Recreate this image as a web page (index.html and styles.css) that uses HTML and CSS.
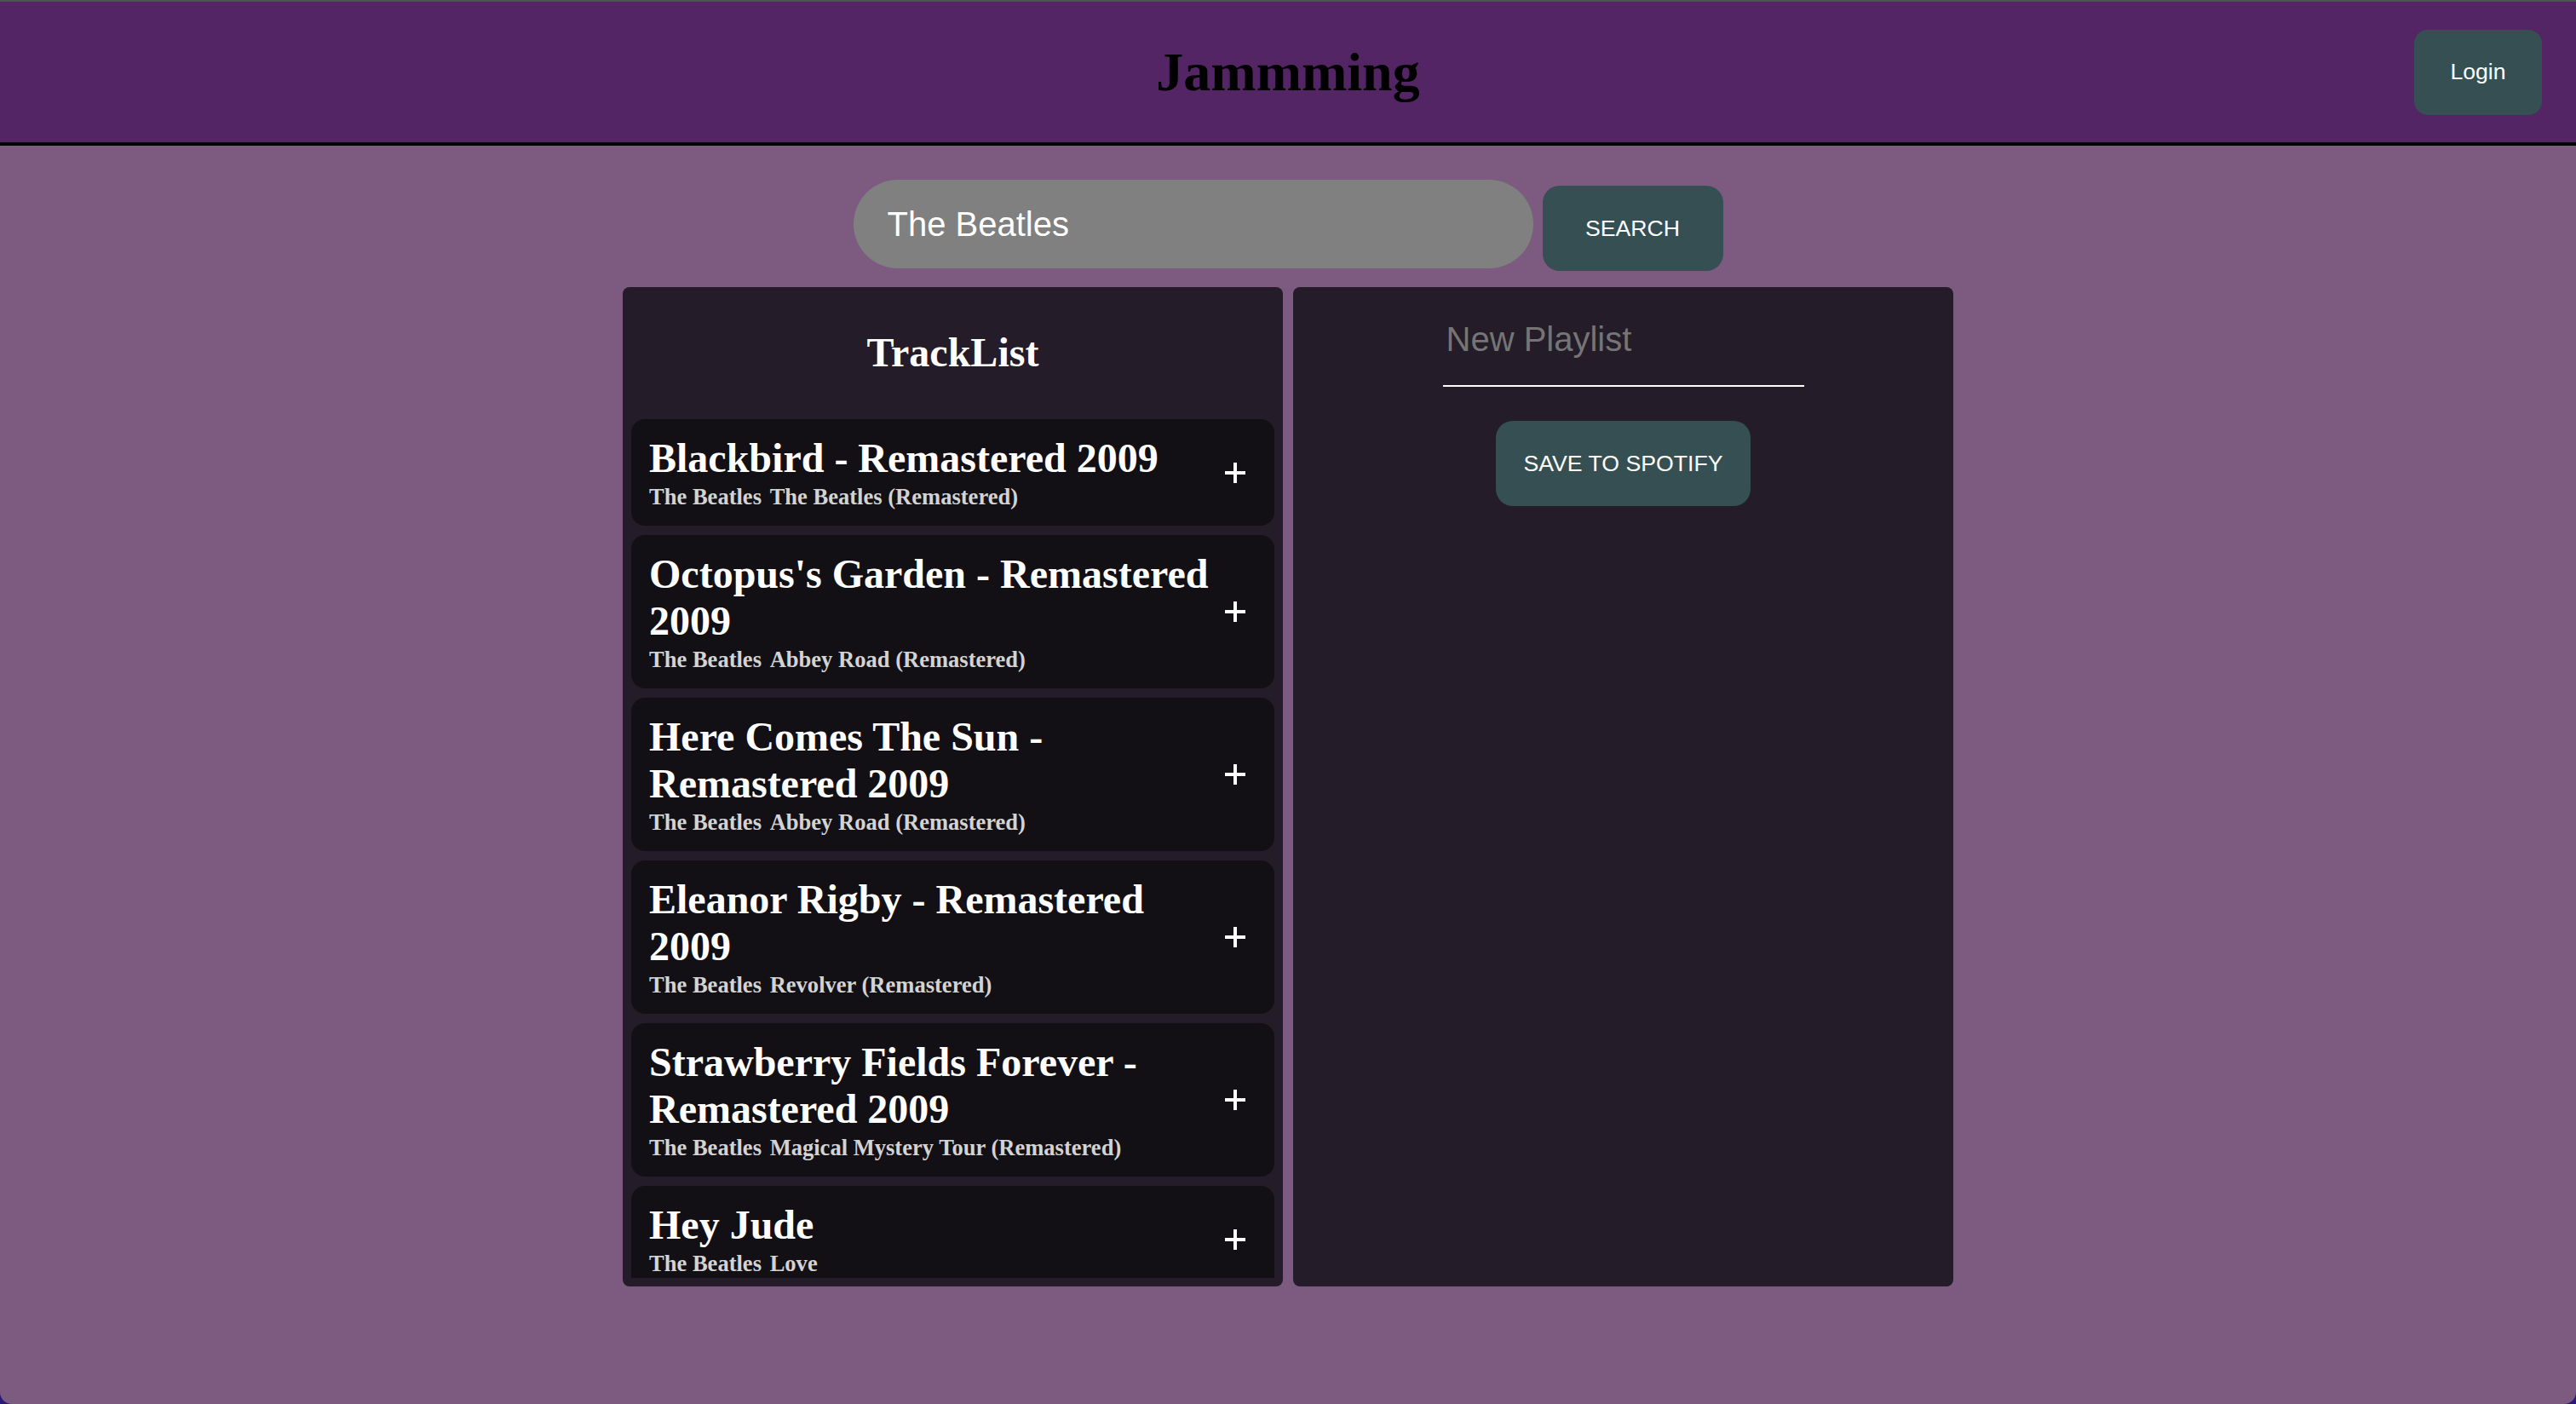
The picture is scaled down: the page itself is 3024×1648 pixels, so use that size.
FILE: index.html
```html
<!DOCTYPE html>
<html lang="en">
<head>
<meta charset="utf-8">
<title>Jammming</title>
<link rel="stylesheet" href="styles.css">
</head>
<body>
<header class="topbar">
  <div class="topbar-side"></div>
  <h1 class="brand">Jammming</h1>
  <div class="topbar-side topbar-actions">
    <button class="btn btn-login" type="button">Login</button>
  </div>
</header>
<main class="app">
  <form class="search">
    <input class="search-input" type="text" value="The Beatles">
    <button class="btn btn-search" type="button">SEARCH</button>
  </form>
  <div class="panels">
    <section class="panel results">
      <h2 class="panel-title">TrackList</h2>
      <div class="track-list">
        <article class="track">
          <div class="track-info">
            <h3 class="track-name">Blackbird - Remastered 2009</h3>
            <p class="track-meta"><span>The Beatles</span> <span class="album">The Beatles (Remastered)</span></p>
          </div>
          <button class="track-add" type="button" aria-label="Add"><svg viewBox="0 0 24 24" width="24" height="24"><path d="M12 0V24M0 12H24" stroke="#fff" stroke-width="4" fill="none"/></svg></button>
        </article>
        <article class="track">
          <div class="track-info">
            <h3 class="track-name">Octopus's Garden - Remastered 2009</h3>
            <p class="track-meta"><span>The Beatles</span> <span class="album">Abbey Road (Remastered)</span></p>
          </div>
          <button class="track-add" type="button" aria-label="Add"><svg viewBox="0 0 24 24" width="24" height="24"><path d="M12 0V24M0 12H24" stroke="#fff" stroke-width="4" fill="none"/></svg></button>
        </article>
        <article class="track">
          <div class="track-info">
            <h3 class="track-name">Here Comes The Sun - Remastered 2009</h3>
            <p class="track-meta"><span>The Beatles</span> <span class="album">Abbey Road (Remastered)</span></p>
          </div>
          <button class="track-add" type="button" aria-label="Add"><svg viewBox="0 0 24 24" width="24" height="24"><path d="M12 0V24M0 12H24" stroke="#fff" stroke-width="4" fill="none"/></svg></button>
        </article>
        <article class="track">
          <div class="track-info">
            <h3 class="track-name">Eleanor Rigby - Remastered 2009</h3>
            <p class="track-meta"><span>The Beatles</span> <span class="album">Revolver (Remastered)</span></p>
          </div>
          <button class="track-add" type="button" aria-label="Add"><svg viewBox="0 0 24 24" width="24" height="24"><path d="M12 0V24M0 12H24" stroke="#fff" stroke-width="4" fill="none"/></svg></button>
        </article>
        <article class="track">
          <div class="track-info">
            <h3 class="track-name">Strawberry Fields Forever - Remastered 2009</h3>
            <p class="track-meta"><span>The Beatles</span> <span class="album">Magical Mystery Tour (Remastered)</span></p>
          </div>
          <button class="track-add" type="button" aria-label="Add"><svg viewBox="0 0 24 24" width="24" height="24"><path d="M12 0V24M0 12H24" stroke="#fff" stroke-width="4" fill="none"/></svg></button>
        </article>
        <article class="track">
          <div class="track-info">
            <h3 class="track-name">Hey Jude</h3>
            <p class="track-meta"><span>The Beatles</span> <span class="album">Love</span></p>
          </div>
          <button class="track-add" type="button" aria-label="Add"><svg viewBox="0 0 24 24" width="24" height="24"><path d="M12 0V24M0 12H24" stroke="#fff" stroke-width="4" fill="none"/></svg></button>
        </article>
      </div>
    </section>
    <section class="panel playlist">
      <input class="playlist-name" type="text" placeholder="New Playlist">
      <button class="btn btn-save" type="button">SAVE TO SPOTIFY</button>
    </section>
  </div>
</main>
<div class="screen-corners"></div>
</body>
</html>
```
FILE: styles.css
```css
html, body {
  margin: 0;
  padding: 0;
}
body {
  background: #7d5a80;
  min-height: 100vh;
  font-family: "Liberation Sans", Arial, sans-serif;
}

.topbar {
  display: grid;
  grid-template-columns: 1fr auto 1fr;
  align-items: center;
  height: 165px;
  background: #532565;
  border-top: 2px solid #4e5450;
  border-bottom: 4px solid #000;
}
.brand {
  margin: 0;
  font-family: "Liberation Serif", "Times New Roman", serif;
  font-weight: bold;
  font-size: 64px;
  color: #000;
}
.topbar-actions {
  display: flex;
  justify-content: flex-end;
  padding-right: 40px;
}

.btn {
  border: none;
  background: #354f52;
  color: #fff;
  font-family: "Liberation Sans", Arial, sans-serif;
  font-size: 26.67px;
  padding: 0;
  cursor: pointer;
}
.btn-login {
  width: 150px;
  height: 100px;
  border-radius: 16px;
}
.btn-search {
  width: 212px;
  height: 100px;
  border-radius: 20px;
  margin-top: 7px;
}
.btn-save {
  display: block;
  width: 299px;
  height: 100px;
  border-radius: 20px;
  margin: 40px auto 0;
}

.search {
  display: flex;
  justify-content: center;
  align-items: flex-start;
  gap: 11px;
  margin: 40px 0 0;
}
.search-input {
  box-sizing: border-box;
  width: 798px;
  height: 104px;
  border: none;
  border-radius: 52px;
  background: #808080;
  color: #fff;
  font-family: "Liberation Sans", Arial, sans-serif;
  font-size: 40px;
  padding: 0 40px;
  outline: none;
}

.panels {
  display: flex;
  justify-content: center;
  gap: 12px;
  margin-top: 19px;
}
.panel {
  box-sizing: border-box;
  width: 775px;
  height: 1173px;
  background: #241c29;
  border-radius: 8px;
}
.results {
  display: flex;
  flex-direction: column;
  padding: 0 10px 10px;
}
.panel-title {
  margin: 0;
  padding: 49px 0 51px;
  text-align: center;
  font-family: "Liberation Serif", "Times New Roman", serif;
  font-weight: bold;
  font-size: 48px;
  color: #fff;
}
.track-list {
  flex: 1;
  min-height: 0;
  overflow-y: auto;
  scrollbar-width: none;
  display: flex;
  flex-direction: column;
  gap: 11px;
}
.track-list::-webkit-scrollbar { display: none; }

.track {
  flex: none;
  display: flex;
  align-items: center;
  background: #131015;
  border-radius: 16px;
  padding: 18px 34px 18px 21px;
}
.track-info {
  flex: 1;
  min-width: 0;
  display: flex;
  flex-direction: column;
  gap: 3px;
}
.track-name {
  margin: 0;
  font-family: "Liberation Serif", "Times New Roman", serif;
  font-weight: bold;
  font-size: 48px;
  color: #fff;
}
.track-meta {
  margin: 0;
  font-family: "Liberation Serif", "Times New Roman", serif;
  font-weight: bold;
  font-size: 26.56px;
  color: #d3d3d3;
}
.track-meta .album {
  margin-left: 3px;
}
.track-add {
  flex: none;
  width: 24px;
  height: 24px;
  margin-left: 8px;
  padding: 0;
  border: none;
  background: transparent;
  display: flex;
}
.track-add svg {
  display: block;
}

.playlist {
  padding-top: 7px;
}
.playlist-name {
  display: block;
  box-sizing: border-box;
  width: 424px;
  height: 110px;
  margin: 0 auto;
  padding: 0 4px;
  border: none;
  border-bottom: 2px solid #fff;
  background: transparent;
  color: #fff;
  font-family: "Liberation Sans", Arial, sans-serif;
  font-size: 40px;
  outline: none;
}
.playlist-name::placeholder {
  color: #757575;
}

.screen-corners {
  position: fixed;
  inset: 0;
  border-radius: 0 0 14px 14px;
  box-shadow: 0 0 0 40px #2b1878;
  pointer-events: none;
}
```
